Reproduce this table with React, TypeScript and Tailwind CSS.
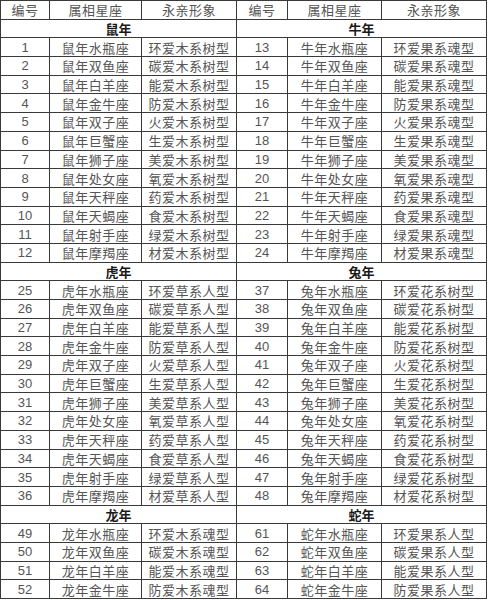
const signs = ['水瓶座', '双鱼座', '白羊座', '金牛座', '双子座', '巨蟹座', '狮子座', '处女座', '天秤座', '天蝎座', '射手座', '摩羯座'];
const prefixes = ['环', '碳', '能', '防', '火', '生', '美', '氧', '药', '食', '绿', '材'];

type Group = { year: string; start: number; kind: string; count: number };

const left: Group[] = [
  { year: '鼠年', start: 1, kind: '木系树型', count: 12 },
  { year: '虎年', start: 25, kind: '草系人型', count: 12 },
  { year: '龙年', start: 49, kind: '木系魂型', count: 4 },
];
const right: Group[] = [
  { year: '牛年', start: 13, kind: '果系魂型', count: 12 },
  { year: '兔年', start: 37, kind: '花系树型', count: 12 },
  { year: '蛇年', start: 61, kind: '果系人型', count: 4 },
];

const cell = 'border border-[#3a3a3a] p-0 text-center align-middle';
const num = `${cell} font-['Liberation_Sans',sans-serif] text-[13px] text-[#555]`;
const cjk = `${cell} font-['Noto_Sans_CJK_SC',sans-serif] text-[13px] text-[#555] tracking-[0.5px]`;
const title = `${cell} font-['Noto_Sans_CJK_SC',sans-serif] text-[13px] font-bold text-[#1a1a1a]`;

export default function App() {
  const rows: React.ReactNode[] = [];
  left.forEach((lg, gi) => {
    const rg = right[gi];
    rows.push(
      <tr key={lg.year} className="h-[18.7px]">
        <td colSpan={3} className={title}>{lg.year}</td>
        <td colSpan={3} className={title}>{rg.year}</td>
      </tr>
    );
    for (let i = 0; i < lg.count; i++) {
      rows.push(
        <tr key={`${lg.year}-${i}`} className="h-[18.7px]">
          <td className={num}>{lg.start + i}</td>
          <td className={cjk}>{lg.year + signs[i]}</td>
          <td className={cjk}>{prefixes[i] + '爱' + lg.kind}</td>
          <td className={num}>{rg.start + i}</td>
          <td className={cjk}>{rg.year + signs[i]}</td>
          <td className={cjk}>{prefixes[i] + '爱' + rg.kind}</td>
        </tr>
      );
    }
  });

  return (
    <div className="w-[488px] h-[600px] bg-white overflow-hidden">
      <table className="w-[486px] table-fixed border-collapse leading-none">
        <colgroup>
          <col className="w-[49px]" />
          <col className="w-[92px]" />
          <col className="w-[95px]" />
          <col className="w-[51px]" />
          <col className="w-[94px]" />
          <col className="w-[105px]" />
        </colgroup>
        <thead>
          <tr className="h-[18.7px]">
            <th className={`${cjk} font-normal`}>编号</th>
            <th className={`${cjk} font-normal`}>属相星座</th>
            <th className={`${cjk} font-normal`}>永亲形象</th>
            <th className={`${cjk} font-normal`}>编号</th>
            <th className={`${cjk} font-normal`}>属相星座</th>
            <th className={`${cjk} font-normal`}>永亲形象</th>
          </tr>
        </thead>
        <tbody>{rows}</tbody>
      </table>
    </div>
  );
}
